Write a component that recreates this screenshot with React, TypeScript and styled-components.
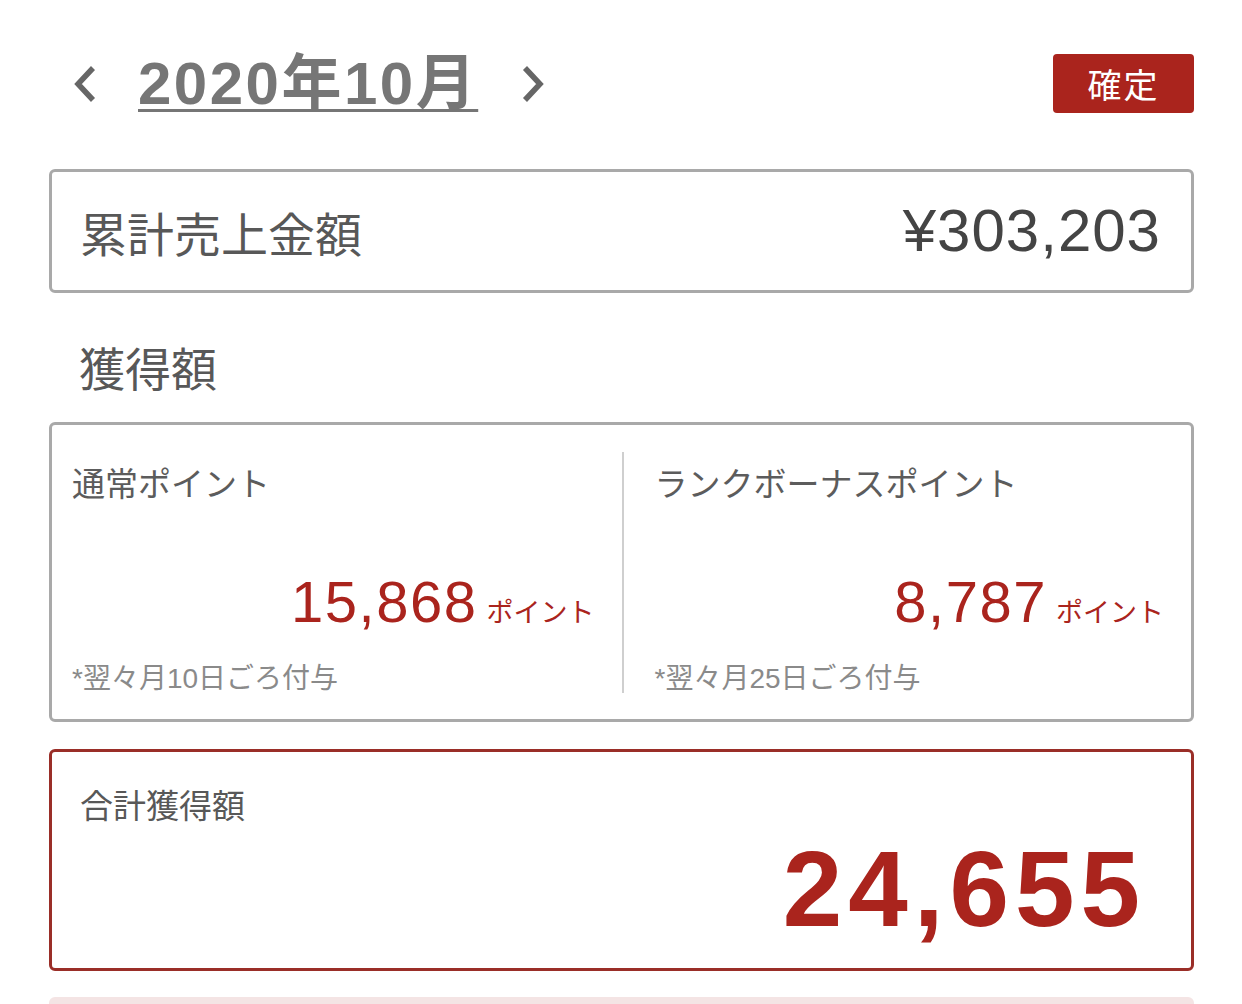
import React from "react";
import styled, { createGlobalStyle } from "styled-components";

const GlobalStyle = createGlobalStyle`
  html, body {
    margin: 0;
    padding: 0;
    background: #ffffff;
  }
  body {
    font-family: "Liberation Sans", "Noto Sans CJK JP", sans-serif;
    -webkit-font-smoothing: antialiased;
  }
`;

const red = "#aa241d";

const Page = styled.div`
  width: 1242px;
  height: 1004px;
  overflow: hidden;
  box-sizing: border-box;
  padding: 54px 48px 0 49px;
`;

const Header = styled.div`
  display: flex;
  align-items: center;
  justify-content: space-between;
  height: 59px;
`;

const MonthNav = styled.div`
  display: flex;
  align-items: center;
`;

const NavButton = styled.button`
  border: none;
  background: none;
  padding: 0;
  margin: 0;
  display: flex;
  align-items: center;
  cursor: pointer;
`;

const MonthTitle = styled.span`
  font-family: "Liberation Sans", "Noto Sans CJK JP", sans-serif;
  font-size: 60px;
  font-weight: 700;
  color: #767676;
  line-height: 1;
  letter-spacing: 2.5px;
  text-decoration: underline;
  text-decoration-thickness: 3px;
  text-underline-offset: 5px;
  margin: 0 42px 0 40px;
`;

const ConfirmButton = styled.button`
  width: 141px;
  height: 59px;
  border: none;
  border-radius: 4px;
  background: ${red};
  color: #ffffff;
  font-family: "Noto Sans CJK JP", sans-serif;
  font-size: 34px;
  letter-spacing: 2px;
  padding: 0;
  cursor: pointer;
`;

const Box = styled.div<{ $accent?: boolean }>`
  box-sizing: border-box;
  border: 3px solid ${(p) => (p.$accent ? "#9a2e28" : "#a9a9a9")};
  border-radius: 6px;
  background: #fff;
`;

const SalesBox = styled(Box)`
  margin-top: 56px;
  height: 124px;
  display: flex;
  align-items: center;
  justify-content: space-between;
  padding: 0 30px 0 28px;
`;

const SalesLabel = styled.span`
  font-family: "Noto Sans CJK JP", sans-serif;
  font-size: 47px;
  color: #585858;
  line-height: 1;
`;

const SalesValue = styled.span`
  font-size: 60px;
  color: #444;
  line-height: 1;
  letter-spacing: 1px;
`;

const SectionTitle = styled.h2`
  margin: 50px 0 33px 30px;
  font-family: "Noto Sans CJK JP", sans-serif;
  font-weight: 400;
  font-size: 46px;
  line-height: 46px;
  color: #585858;
`;

const PointsBox = styled(Box)`
  height: 300px;
  padding: 27px 0 26px;
  display: grid;
  grid-template-columns: 1fr 1fr;
`;

const PointCol = styled.div<{ $divided?: boolean; $padLeft: number; $padRight: number }>`
  display: flex;
  flex-direction: column;
  padding: 0 ${(p) => p.$padRight}px 0 ${(p) => p.$padLeft}px;
  border-left: ${(p) => (p.$divided ? "2px solid #cfcfcf" : "none")};
`;

const PointLabel = styled.div`
  font-family: "Noto Sans CJK JP", sans-serif;
  font-size: 33px;
  line-height: 1;
  color: #5c5c5c;
  margin-top: 14px;
`;

const PointRow = styled.div`
  margin-top: auto;
  display: flex;
  justify-content: flex-end;
  align-items: baseline;
  line-height: 1;
  color: ${red};
`;

const PointNumber = styled.span`
  font-size: 58px;
  letter-spacing: 1.5px;
`;

const PointUnit = styled.span`
  font-family: "Noto Sans CJK JP", sans-serif;
  font-size: 27px;
  margin-left: 9px;
`;

const PointNote = styled.div`
  font-family: "Liberation Sans", "Noto Sans CJK JP", sans-serif;
  font-size: 28px;
  line-height: 1;
  color: #8a8a8a;
  margin-top: 34px;
`;

const TotalBox = styled(Box)`
  margin-top: 27px;
  height: 222px;
  display: flex;
  flex-direction: column;
  padding: 0 45px 0 28px;
`;

const TotalLabel = styled.div`
  font-family: "Noto Sans CJK JP", sans-serif;
  font-size: 33px;
  line-height: 1;
  color: #585858;
  margin-top: 36px;
`;

const TotalValue = styled.div`
  margin-top: auto;
  margin-bottom: 25px;
  text-align: right;
  font-size: 107px;
  font-weight: 700;
  line-height: 1;
  color: ${red};
  letter-spacing: 6px;
`;

const PinkStrip = styled.div`
  margin-top: 26px;
  height: 40px;
  background: #f4e4e4;
  border-radius: 6px 6px 0 0;
`;

function Chevron({ dir }: { dir: "left" | "right" }) {
  return (
    <svg width="26" height="38" viewBox="0 0 26 38">
      <path
        d={dir === "left" ? "M21 3 L6 19 L21 35" : "M5 3 L20 19 L5 35"}
        fill="none"
        stroke="#666"
        strokeWidth="5.5"
        strokeLinecap="butt"
        strokeLinejoin="miter"
      />
    </svg>
  );
}

const points = [
  { label: "通常ポイント", value: "15,868", note: "*翌々月10日ごろ付与", padLeft: 20, padRight: 27, divided: false },
  { label: "ランクボーナスポイント", value: "8,787", note: "*翌々月25日ごろ付与", padLeft: 31, padRight: 27, divided: true },
];

export default function App() {
  return (
    <>
      <GlobalStyle />
      <Page>
        <Header>
          <MonthNav>
            <NavButton style={{ marginLeft: 23 }}>
              <Chevron dir="left" />
            </NavButton>
            <MonthTitle>2020年10月</MonthTitle>
            <NavButton>
              <Chevron dir="right" />
            </NavButton>
          </MonthNav>
          <ConfirmButton>確定</ConfirmButton>
        </Header>

        <SalesBox>
          <SalesLabel>累計売上金額</SalesLabel>
          <SalesValue>¥303,203</SalesValue>
        </SalesBox>

        <SectionTitle>獲得額</SectionTitle>

        <PointsBox>
          {points.map((p) => (
            <PointCol key={p.label} $divided={p.divided} $padLeft={p.padLeft} $padRight={p.padRight}>
              <PointLabel>{p.label}</PointLabel>
              <PointRow>
                <PointNumber>{p.value}</PointNumber>
                <PointUnit>ポイント</PointUnit>
              </PointRow>
              <PointNote>{p.note}</PointNote>
            </PointCol>
          ))}
        </PointsBox>

        <TotalBox $accent>
          <TotalLabel>合計獲得額</TotalLabel>
          <TotalValue>24,655</TotalValue>
        </TotalBox>

        <PinkStrip />
      </Page>
    </>
  );
}
